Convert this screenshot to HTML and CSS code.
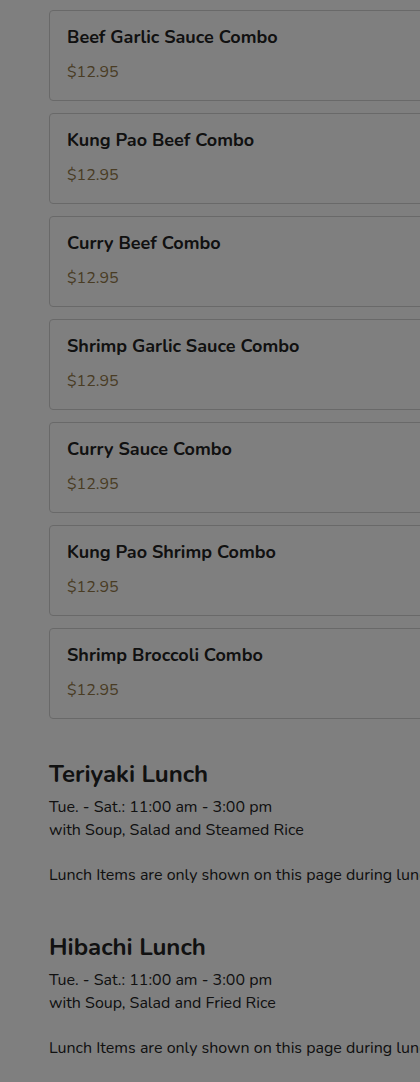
FILE: index.html
```html
<!DOCTYPE html>
<html>
<head>
<meta charset="utf-8">
<link rel="stylesheet" href="styles.css">
</head>
<body>
<main class="page">
  <section class="items">
    <div class="card"><div class="name">Beef Garlic Sauce Combo</div><div class="price">$12.95</div></div>
    <div class="card"><div class="name">Kung Pao Beef Combo</div><div class="price">$12.95</div></div>
    <div class="card"><div class="name">Curry Beef Combo</div><div class="price">$12.95</div></div>
    <div class="card"><div class="name">Shrimp Garlic Sauce Combo</div><div class="price">$12.95</div></div>
    <div class="card"><div class="name">Curry Sauce Combo</div><div class="price">$12.95</div></div>
    <div class="card"><div class="name">Kung Pao Shrimp Combo</div><div class="price">$12.95</div></div>
    <div class="card"><div class="name">Shrimp Broccoli Combo</div><div class="price">$12.95</div></div>
  </section>
  <section class="category">
    <h2 class="cat-title">Teriyaki Lunch</h2>
    <p class="cat-desc">Tue. - Sat.: 11:00 am - 3:00 pm<br>with Soup, Salad and Steamed Rice</p>
    <p class="cat-note">Lunch Items are only shown on this page during lunch hours.</p>
  </section>
  <section class="category">
    <h2 class="cat-title">Hibachi Lunch</h2>
    <p class="cat-desc">Tue. - Sat.: 11:00 am - 3:00 pm<br>with Soup, Salad and Fried Rice</p>
    <p class="cat-note">Lunch Items are only shown on this page during lunch hours.</p>
  </section>
</main>
<div class="overlay"></div>
</body>
</html>
```

FILE: styles.css
```css
html, body {
  margin: 0;
  padding: 0;
  background: #ffffff;
  overflow: hidden;
}
body {
  font-family: "Nunito", "Lato", "Open Sans", sans-serif;
  color: #222222;
}
.page {
  padding: 10px 0 0 49px;
  width: 600px;
}
.items {
  display: flex;
  flex-direction: column;
  gap: 12px;
}
.card {
  box-sizing: border-box;
  height: 91px;
  border: 1px solid #d2d2d2;
  border-radius: 4px;
  padding: 15px 17px 0;
  background: #ffffff;
}
.name {
  font-size: 18px;
  font-weight: 700;
  line-height: 22px;
}
.price {
  margin-top: 14px;
  font-size: 16px;
  line-height: 20px;
  color: #927848;
}
.category {
  margin-top: 45px;
}
.items + .category {
  margin-top: 40px;
}
.cat-title {
  margin: 0;
  font-size: 24px;
  font-weight: 700;
  line-height: 30px;
}
.cat-desc {
  margin: 7px 0 0;
  font-size: 16px;
  line-height: 23px;
}
.cat-note {
  margin: 22px 0 0;
  font-size: 16px;
  line-height: 23px;
  white-space: nowrap;
}
.overlay {
  position: fixed;
  inset: 0;
  background: rgba(0, 0, 0, 0.5);
}
```
